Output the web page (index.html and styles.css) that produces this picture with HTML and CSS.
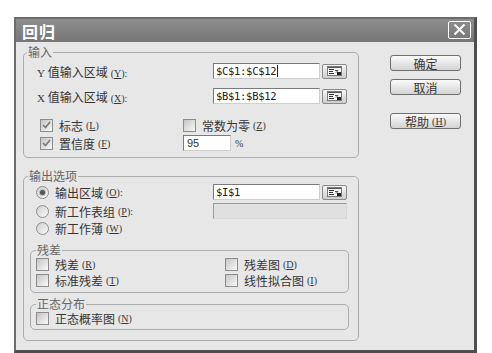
FILE: index.html
```html
<!DOCTYPE html>
<html lang="zh-CN">
<head>
  <meta charset="UTF-8">
  <title>回归</title>
  <link rel="stylesheet" href="styles.css">
</head>
<body>
  <div class="dialog">
    <div class="titlebar">
      <span class="title">回归</span>
      <span class="close">
        <svg width="13" height="11" viewBox="0 0 13 11"><path d="M1.5 0.5L11.5 10.5M11.5 0.5L1.5 10.5" stroke="#fff" stroke-width="2"/></svg>
      </span>
    </div>

    <div class="body">
      <div class="main">
        <fieldset class="group input-group">
          <legend>输入</legend>
          <div class="rows">
            <div class="field-row">
              <span class="label"><span class="latin">Y</span> 值输入区域<span class="key">(<u>Y</u>):</span></span>
              <span class="text-input"><span class="val">$C$1:$C$12</span><span class="caret"></span></span>
              <span class="ref-btn"><svg width="15" height="10" viewBox="0 0 15 10"><rect x="0.5" y="0.5" width="14" height="9" fill="#f4f4f4" stroke="#7a7a7a"/><path d="M1 1.5h13" stroke="#555"/><path d="M2 3.5h5M2 5.5h4M2 7.5h5" stroke="#333"/><path d="M8 4.5h3M9 6.5l2-2" stroke="#555"/><rect x="10" y="6" width="4" height="3" fill="#222"/></svg></span>
            </div>
            <div class="field-row">
              <span class="label"><span class="latin">X</span> 值输入区域<span class="key">(<u>X</u>):</span></span>
              <span class="text-input"><span class="val">$B$1:$B$12</span></span>
              <span class="ref-btn"><svg width="15" height="10" viewBox="0 0 15 10"><rect x="0.5" y="0.5" width="14" height="9" fill="#f4f4f4" stroke="#7a7a7a"/><path d="M1 1.5h13" stroke="#555"/><path d="M2 3.5h5M2 5.5h4M2 7.5h5" stroke="#333"/><path d="M8 4.5h3M9 6.5l2-2" stroke="#555"/><rect x="10" y="6" width="4" height="3" fill="#222"/></svg></span>
            </div>
            <div class="check-grid">
              <label class="opt"><span class="cb"><svg width="9" height="8" viewBox="0 0 9 8"><path d="M1 4l2.5 2.5L8 1" fill="none" stroke="#7a7a7a" stroke-width="1.6"/></svg></span>标志<span class="key">(<u>L</u>)</span></label>
              <label class="opt"><span class="cb"></span>常数为零<span class="key">(<u>Z</u>)</span></label>
              <label class="opt"><span class="cb"><svg width="9" height="8" viewBox="0 0 9 8"><path d="M1 4l2.5 2.5L8 1" fill="none" stroke="#7a7a7a" stroke-width="1.6"/></svg></span>置信度<span class="key">(<u>F</u>)</span></label>
              <span class="opt"><span class="num-input">95</span><span class="pct">%</span></span>
            </div>
          </div>
        </fieldset>

        <fieldset class="group output-group">
          <legend>输出选项</legend>
          <div class="out-rows">
            <div class="radio-row">
              <span class="radio-label"><span class="rb on"></span>输出区域<span class="key">(<u>O</u>):</span></span>
              <span class="text-input"><span class="val">$I$1</span></span>
              <span class="ref-btn"><svg width="15" height="10" viewBox="0 0 15 10"><rect x="0.5" y="0.5" width="14" height="9" fill="#f4f4f4" stroke="#7a7a7a"/><path d="M1 1.5h13" stroke="#555"/><path d="M2 3.5h5M2 5.5h4M2 7.5h5" stroke="#333"/><path d="M8 4.5h3M9 6.5l2-2" stroke="#555"/><rect x="10" y="6" width="4" height="3" fill="#222"/></svg></span>
            </div>
            <div class="radio-row">
              <span class="radio-label"><span class="rb"></span>新工作表组<span class="key">(<u>P</u>):</span></span>
              <span class="text-input disabled"></span>
            </div>
            <div class="radio-row short">
              <span class="radio-label"><span class="rb"></span>新工作薄<span class="key">(<u>W</u>)</span></span>
            </div>
          </div>

          <fieldset class="group sub residual">
            <legend>残差</legend>
            <div class="sub-grid">
              <label class="opt"><span class="cb"></span>残差<span class="key">(<u>R</u>)</span></label>
              <label class="opt"><span class="cb"></span>残差图<span class="key">(<u>D</u>)</span></label>
              <label class="opt"><span class="cb"></span>标准残差<span class="key">(<u>T</u>)</span></label>
              <label class="opt"><span class="cb"></span>线性拟合图<span class="key">(<u>I</u>)</span></label>
            </div>
          </fieldset>

          <fieldset class="group sub normal">
            <legend>正态分布</legend>
            <label class="opt"><span class="cb"></span>正态概率图<span class="key">(<u>N</u>)</span></label>
          </fieldset>
        </fieldset>
      </div>

      <div class="side">
        <span class="btn">确定</span>
        <span class="btn">取消</span>
        <span class="btn help">帮助<span class="key">(<u>H</u>)</span></span>
      </div>
    </div>
  </div>
</body>
</html>
```

FILE: styles.css
```css
body { margin: 0; background: #fff; font-family: "Noto Sans CJK SC", "Noto Sans", sans-serif; font-size: 12px; color: #363636; }

.dialog { margin: 17px 0 0 14px; width: 458px; height: 331px; border: 2px solid #6c6c6c; border-right: 3px solid #4f4f4f; border-bottom: 3px solid #4f4f4f; background: #e7e7e7; }

.titlebar { height: 23px; display: flex; align-items: center; justify-content: space-between; padding: 0 3px 0 6px; background: linear-gradient(#8e8e8e, #767676); }
.title { color: #fff; font-size: 16px; font-weight: bold; letter-spacing: 1px; line-height: 18px; }
.close { width: 23px; height: 18px; box-sizing: border-box; border: 1.5px solid #fff; border-radius: 2px; display: flex; align-items: center; justify-content: center; margin-top: -2px; }

.body { display: flex; padding: 3px 0 0 7px; }
.main { width: 336px; }
.side { width: 71px; margin-left: 31px; padding-top: 10px; display: flex; flex-direction: column; }

.group { margin: 0; padding: 0 0 6px 3px; border: 1px solid #adadad; border-radius: 5px; min-width: 0; }
.group legend { padding: 0 1px; line-height: 14px; color: #666; }

.rows { padding: 4px 0 0 10px; }
.field-row { display: flex; align-items: center; height: 16px; }
.field-row + .field-row { margin-top: 9px; }
.label { width: 176px; white-space: nowrap; }
.latin { font-family: "Liberation Serif", serif; font-size: 11px; }
.key { font-family: "Liberation Serif", serif; font-size: 10px; margin-left: 3px; }

.text-input { width: 107px; height: 16px; box-sizing: border-box; background: #fff; border: 1px solid; border-color: #7a7a7a #cfcfcf #cfcfcf #7a7a7a; padding-left: 2px; display: flex; align-items: center; }
.text-input .val { font-family: "DejaVu Sans Mono", monospace; font-size: 10.5px; line-height: 14px; letter-spacing: -0.3px; color: #222; }
.text-input.disabled { width: 134px; background: #e0e0e0; border-color: #9a9a9a #d8d8d8 #d8d8d8 #9a9a9a; }
.caret { width: 1px; height: 12px; background: #222; margin-left: 1px; }
.ref-btn { width: 25px; height: 15px; box-sizing: border-box; margin-left: 2px; border: 1px solid #8a8a8a; border-radius: 2px; background: linear-gradient(#f6f6f6, #cdcdcd); display: flex; align-items: center; justify-content: center; }

.check-grid { display: grid; grid-template-columns: 143px auto; grid-template-rows: 14px 16px; row-gap: 3px; margin-top: 14px; padding-left: 3px; align-items: center; }
.opt { display: flex; align-items: center; white-space: nowrap; }
.cb { width: 13px; height: 13px; box-sizing: border-box; border: 1px solid #8c8c8c; background: linear-gradient(135deg, #c4c4c4, #f9f9f9); display: inline-flex; align-items: center; justify-content: center; margin-right: 6px; }
.num-input { width: 48px; height: 16px; box-sizing: border-box; background: #fff; border: 1px solid; border-color: #7a7a7a #cfcfcf #cfcfcf #7a7a7a; padding-left: 3px; font-family: "Liberation Sans", sans-serif; font-size: 11px; line-height: 14px; }
.pct { margin-left: 4px; font-family: "Liberation Serif", serif; font-size: 10px; }

.output-group { margin-top: 11px; padding: 0 9px 10px 4px; }
.out-rows { padding: 1px 0 0 8px; }
.radio-row { display: flex; align-items: center; height: 16px; }
.radio-row + .radio-row { margin-top: 3px; }
.radio-row.short { height: 14px; margin-top: 2px; }
.radio-label { width: 177px; display: flex; align-items: center; white-space: nowrap; }
.rb { width: 13px; height: 13px; box-sizing: border-box; border-radius: 50%; border: 1px solid #8c8c8c; background: linear-gradient(135deg, #cfcfcf, #fafafa); margin-right: 6px; display: inline-flex; align-items: center; justify-content: center; }
.rb.on::after { content: ""; width: 5px; height: 5px; border-radius: 50%; background: #555; box-shadow: 0 0 0 1px #bdbdbd; }

.sub { margin: 8px 0 0 2px; padding: 0 0 5px 5px; }
.sub-grid { display: grid; grid-template-columns: 189px auto; grid-template-rows: 14px 14px; row-gap: 2px; align-items: center; }
.normal { margin-top: 4px; padding-bottom: 4px; }
.normal .opt { height: 14px; }

.btn { height: 16px; box-sizing: border-box; border: 1px solid #6f6f6f; border-radius: 3px; background: linear-gradient(#fbfbfb, #d3d3d3); display: flex; align-items: center; justify-content: center; font-size: 12px; }
.btn + .btn { margin-top: 8px; }
.btn.help { margin-top: 18px; }
```
